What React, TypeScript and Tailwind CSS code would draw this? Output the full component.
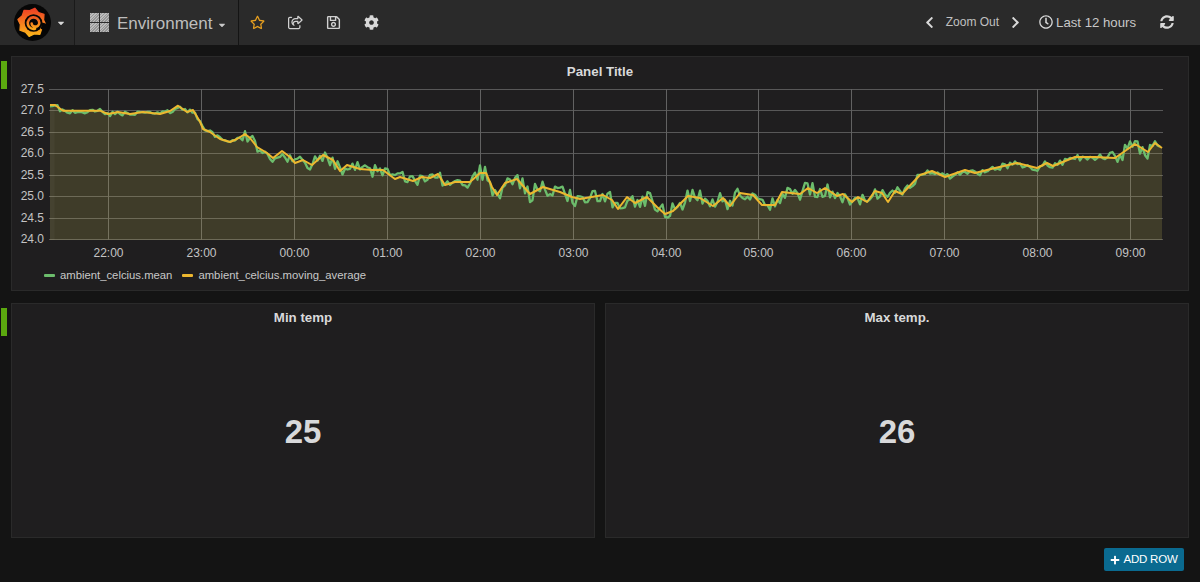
import { FaRegStar, FaRegSave, FaCog, FaChevronLeft, FaChevronRight, FaRegClock, FaSyncAlt, FaPlus, FaCaretDown } from "react-icons/fa";
import { FaRegShareFromSquare } from "react-icons/fa6";

const maPts: [number, number][] = [
  [50,105],[55,105],[63,110.7],[80,110.7],[100,110.7],[108,114],[118,112],[130,114],[143,112],[160,114],[170,111],[178,105.7],[187,112],[193,110],[200,121.7],[203,129],[210,132],[220,139],[230,142],[237,139],[245,134],[250,138],[257,147],[267,153],[273,158],[282,151],[290,157],[295,163],[303,160],[312,165],[323,155],[333,160],[340,171],[347,165],[360,169],[373,170],[383,170],[395,179],
  [400,177],[413,181],[422,177],[430,178],[438,174],[445,185],[455,182],[470,182],[480,173],[486,173],[492,187],[497,195],[505,183],[517,179],[530,194],[543,187],[560,192],[572,197],[580,199],[603,195],[612,200],[618,209],[627,197],[635,203],[647,197],[657,207],[665,214],[673,211],[688,196],[700,198],[713,206],[723,198],[730,206],[740,193],[753,195],[762,205],[775,205],[782,192],
  [800,194],[808,188],[817,193],[825,188],[837,196],[843,194],[852,202],[858,197],[867,202],[875,191],[882,193],[888,202],[895,191],[902,194],[920,175],[932,171],[945,177],[965,170],[975,173],[995,168],[1017,163],[1037,168],[1047,163],[1053,166],[1075,157],[1095,157],[1115,158],[1135,144],[1148,152],[1155,143],[1162,148],
];

function maAt(x: number) {
  for (let i = 1; i < maPts.length; i++) {
    if (x <= maPts[i][0]) {
      const [x0, y0] = maPts[i - 1];
      const [x1, y1] = maPts[i];
      return y0 + ((y1 - y0) * (x - x0)) / (x1 - x0);
    }
  }
  return maPts[maPts.length - 1][1];
}

function amp(x: number) {
  if (x < 240) return 2.4;
  if (x < 480) return 6.5;
  if (x < 900) return 8;
  if (x < 1100) return 3.2;
  return 7;
}

const rnd = (i: number) => {
  const v = Math.sin(i * 127.1 + 11.7) * 43758.5453;
  return v - Math.floor(v);
};

const meanPts: [number, number][] = [];
for (let x = 50, i = 0; x <= 1162; x += 2.5, i++) {
  meanPts.push([x, maAt(x) + (rnd(i) - 0.5) * 2 * amp(x) + 0.3]);
}

const toLine = (p: [number, number][]) => p.map(([x, y]) => `${x},${y.toFixed(1)}`).join(" ");
const areaPath = `M50,240 L${maPts.map(([x, y]) => `${x},${y.toFixed(1)}`).join(" L")} L1162,240 Z`;

const yTicks = ["27.5", "27.0", "26.5", "26.0", "25.5", "25.0", "24.5", "24.0"];
const xTicks: [string, number][] = [
  ["22:00", 108.5],["23:00", 201.5],["00:00", 294.5],["01:00", 387.5],["02:00", 480.5],["03:00", 573.5],["04:00", 666.5],["05:00", 758.5],["06:00", 851.5],["07:00", 944.5],["08:00", 1037.5],["09:00", 1130.5],
];

function GrafanaLogo() {
  const teeth = 8;
  const pts: string[] = [];
  for (let i = 0; i < teeth * 2; i++) {
    const r = i % 2 === 0 ? 14 : 11.5;
    const a = (i / (teeth * 2)) * Math.PI * 2 - Math.PI / 2 + 0.2;
    pts.push(`${(17.5 + r * Math.cos(a)).toFixed(1)},${(17.8 + r * Math.sin(a)).toFixed(1)}`);
  }
  return (
    <svg width="37" height="37" viewBox="0 0 36 36">
      <defs>
        <linearGradient id="gf" x1="0" y1="0" x2="0" y2="1">
          <stop offset="0" stopColor="#ee3d24" />
          <stop offset="1" stopColor="#fdb719" />
        </linearGradient>
        <linearGradient id="gs" x1="0" y1="0" x2="0" y2="1">
          <stop offset="0" stopColor="#f05a22" />
          <stop offset="1" stopColor="#fca91c" />
        </linearGradient>
      </defs>
      <circle cx="18" cy="18" r="18" fill="#060606" />
      <polygon points={pts.join(" ")} fill="url(#gf)" stroke="url(#gf)" strokeWidth="1.2" strokeLinejoin="round" />
      <circle cx="19" cy="18.5" r="8.6" fill="#060606" />
      <path d="M26 24 L32 27 L34 20 L27.5 18 Z" fill="#060606" />
      <path d="M20.5 24 A5.6 5.6 0 1 1 24.6 18.5 A3.8 3.8 0 0 1 20.5 22 A3 3 0 0 1 17.2 19" fill="none" stroke="url(#gs)" strokeWidth="2.5" strokeLinecap="round" />
    </svg>
  );
}

function GridIcon() {
  const cell = "w-[9px] h-[9px] bg-[repeating-linear-gradient(135deg,#bcbcbc_0px,#bcbcbc_1px,#959595_1px,#959595_2px)]";
  return (
    <div className="grid grid-cols-2 gap-[1px]">
      <div className={cell} />
      <div className={cell} />
      <div className={cell} />
      <div className={cell} />
    </div>
  );
}

function Chart() {
  return (
    <svg width="1176" height="179" viewBox="12 81 1176 179" className="block">
      {yTicks.map((t, i) => {
        const y = Math.floor(89 + i * 21.5) + 0.5;
        return (
          <g key={t}>
            <line x1="49" x2="1163" y1={y} y2={y} stroke="#585858" strokeWidth="1" />
            <text x="44" y={y + 3.5} textAnchor="end" fontSize="12" fill="#c4c4c4">{t}</text>
          </g>
        );
      })}
      {xTicks.map(([t, x]) => (
        <g key={t}>
          <line x1={x} x2={x} y1="89" y2="240" stroke="#626262" strokeWidth="1" />
          <text x={x} y="257" textAnchor="middle" fontSize="12" fill="#c4c4c4">{t}</text>
        </g>
      ))}
      <path d={areaPath} fill="#c2b256" fillOpacity="0.2" />
      <rect x="50" y="108" width="4.5" height="132" fill="#ffffff" fillOpacity="0.035" />
      <polyline points={toLine(meanPts)} fill="none" stroke="#6cbd6c" strokeWidth="2.3" strokeLinejoin="round" />
      <polyline points={toLine(maPts)} fill="none" stroke="#ecb72f" strokeWidth="2" strokeLinejoin="round" />
    </svg>
  );
}

function LegendItem({ color, label }: { color: string; label: string }) {
  return (
    <div className="flex items-center gap-[5px]">
      <span className={`w-[11px] h-[3px] rounded-[1px] ${color}`} />
      <span className="text-[11.3px] text-[#c8c8c8]">{label}</span>
    </div>
  );
}

function StatPanel({ title, value }: { title: string; value: string }) {
  return (
    <section className="h-[235px] bg-[#1f1e1f] border border-[#2a2a2a] flex flex-col">
      <h2 className="h-[28px] leading-[28px] text-center text-[13.3px] font-bold text-[#d8d9da]">{title}</h2>
      <div className="flex-1 flex items-center justify-center pb-[6px] text-[33px] font-bold text-[#d8d9da]">{value}</div>
    </section>
  );
}

function RowHandle() {
  return <div className="absolute left-[-10px] top-[5px] w-[6px] h-[28px] bg-[#5ba80f]" />;
}

export default function App() {
  return (
    <div className="h-[582px] w-[1200px] overflow-hidden bg-[#141414] flex flex-col font-['Liberation_Sans',Arial,sans-serif]">
      <header className="h-[45px] shrink-0 bg-[#2a2a2a] flex items-center text-[#c8c8c8]">
        <div className="w-[75px] h-full flex items-center pl-[14px] gap-[5px] border-r border-[#1a1a1a]">
          <GrafanaLogo />
          <FaCaretDown className="text-[#d8d8d8] text-[10px]" />
        </div>
        <div className="w-[164px] h-full flex items-center pl-[15px] border-r border-[#141414] bg-[#2c2c2c]">
          <GridIcon />
          <span className="ml-[8px] pt-[2px] text-[17px] text-[#bdbdbd]">Environment</span>
          <FaCaretDown className="ml-[5px] text-[#c8c8c8] text-[10px] mt-[4px]" />
        </div>
        <div className="flex items-center ml-[11px] gap-[23px] text-[15px]">
          <FaRegStar className="text-[#e8a020]" />
          <FaRegShareFromSquare className="text-[#d0d0d0]" />
          <FaRegSave className="text-[#d0d0d0]" />
          <FaCog className="text-[#d8d8d8]" />
        </div>
        <div className="ml-auto flex items-center pr-[26px]">
          <FaChevronLeft className="text-[#d8d8d8] text-[13px]" />
          <span className="ml-[10px] text-[12px] text-[#c0c0c0]">Zoom Out</span>
          <FaChevronRight className="ml-[10px] text-[#d8d8d8] text-[13px]" />
          <FaRegClock className="ml-[17px] text-[#d8d8d8] text-[14px]" />
          <span className="ml-[3px] pt-[1px] text-[13.2px] text-[#c8c8c8]">Last 12 hours</span>
          <FaSyncAlt className="ml-[24px] text-[#d8d8d8] text-[14px]" />
        </div>
      </header>
      <main className="flex-1 px-[11px] pt-[11px] flex flex-col">
        <div className="relative">
          <RowHandle />
          <section className="h-[235px] bg-[#1f1e1f] border border-[#2a2a2a] flex flex-col">
            <h2 className="h-[24px] pt-[6px] leading-[17px] text-center text-[13.3px] font-bold text-[#d8d9da]">Panel Title</h2>
            <Chart />
            <div className="flex items-center gap-[10px] pl-[32px] pt-[7px]">
              <LegendItem color="bg-[#6cbd6c]" label="ambient_celcius.mean" />
              <LegendItem color="bg-[#ecb72f]" label="ambient_celcius.moving_average" />
            </div>
          </section>
        </div>
        <div className="relative mt-[12px] grid grid-cols-2 gap-[10px]">
          <RowHandle />
          <StatPanel title="Min temp" value="25" />
          <StatPanel title="Max temp." value="26" />
        </div>
        <div className="flex justify-end mt-[10px] pr-[5px]">
          <button className="w-[80px] h-[23px] bg-[#0a6a90] rounded-[2px] text-white text-[11.5px] tracking-[-0.2px] flex items-center justify-center gap-[3px]">
            <FaPlus className="text-[10px]" />
            ADD ROW
          </button>
        </div>
      </main>
    </div>
  );
}
